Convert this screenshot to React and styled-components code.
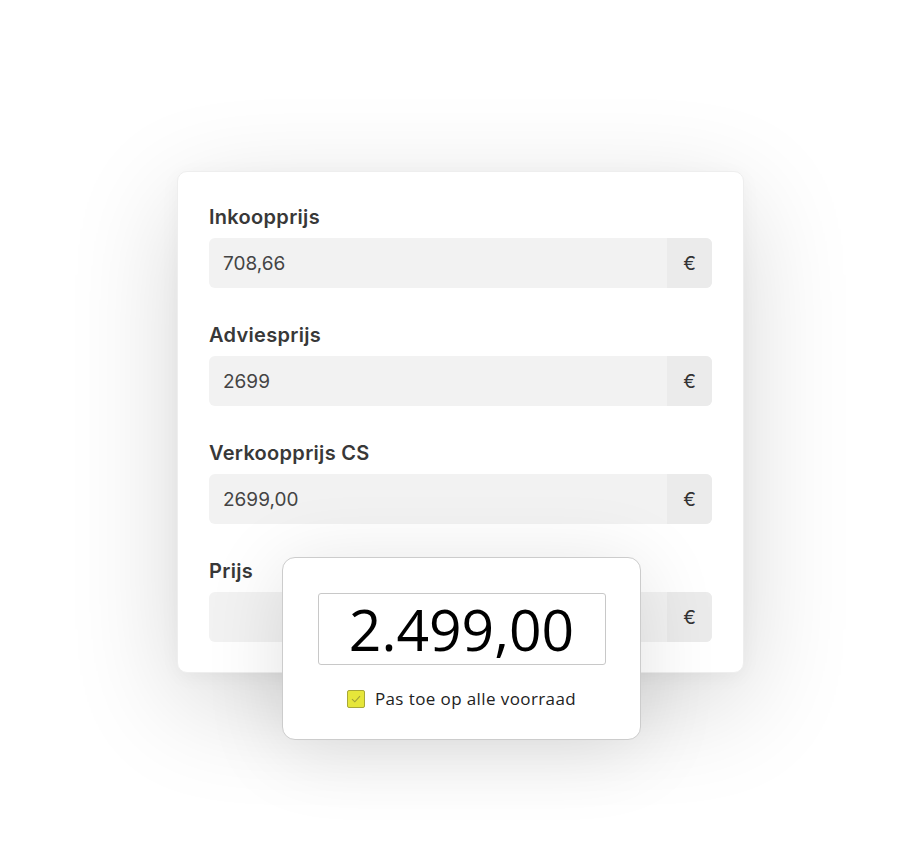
import React from 'react'
import styled, { createGlobalStyle } from 'styled-components'

const GlobalStyle = createGlobalStyle`
    html, body {
        margin: 0;
        padding: 0;
        background: #ffffff;
    }
    body {
        font-family: "Inter", "Open Sans", sans-serif;
    }
`

const fields = [
    { label: 'Inkoopprijs', value: '708,66' },
    { label: 'Adviesprijs', value: '2699' },
    { label: 'Verkoopprijs CS', value: '2699,00' },
    { label: 'Prijs', value: '' },
]

const App = () => {
    return (
        <>
            <GlobalStyle />
            <Page>
                <Stage>
                    <Card>
                        {fields.map((f) => (
                            <Field key={f.label}>
                                <Label>{f.label}</Label>
                                <InputGroup>
                                    <Value>{f.value}</Value>
                                    <Addon>€</Addon>
                                </InputGroup>
                            </Field>
                        ))}
                    </Card>
                    <Popup>
                        <BigInput>2.499,00</BigInput>
                        <CheckRow>
                            <Check>
                                <svg width="10" height="8" viewBox="0 0 10 8">
                                    <path d="M1 4.2 L3.8 6.8 L9 1.2" fill="none" stroke="#a0a038" strokeWidth="1.1" />
                                </svg>
                            </Check>
                            <CheckLabel>Pas toe op alle voorraad</CheckLabel>
                        </CheckRow>
                    </Popup>
                </Stage>
            </Page>
        </>
    )
}

export default App

const Page = styled.div`
    width: 921px;
    height: 855px;
    display: flex;
    justify-content: center;
    padding-top: 171px;
    box-sizing: border-box;
    overflow: hidden;
`

const Stage = styled.div`
    position: relative;
    width: 567px;
    height: 501px;
`

const Card = styled.div`
    width: 567px;
    box-sizing: border-box;
    background: #ffffff;
    border-radius: 10px;
    border: 1px solid #eeeeee;
    padding: 32px 31px 30px 31px;
    display: flex;
    flex-direction: column;
    gap: 34px;
    box-shadow: 0 30px 110px rgba(0, 0, 0, 0.16), 0 4px 20px rgba(0, 0, 0, 0.04);
`

const Field = styled.div`
    display: flex;
    flex-direction: column;
    gap: 7px;
`

const Label = styled.div`
    font-family: "Inter", sans-serif;
    font-weight: 600;
    font-size: 20px;
    line-height: 27px;
    color: #383838;
    letter-spacing: 0.3px;
`

const InputGroup = styled.div`
    display: flex;
    height: 50px;
    border-radius: 6px;
    overflow: hidden;
    background: #f2f2f2;
`

const Value = styled.div`
    flex: 1;
    display: flex;
    align-items: center;
    padding-left: 14px;
    font-family: "Inter", sans-serif;
    font-size: 19px;
    color: #444444;
`

const Addon = styled.div`
    width: 45px;
    display: flex;
    align-items: center;
    justify-content: center;
    background: #ebebeb;
    font-family: "Inter", sans-serif;
    font-size: 19px;
    color: #333333;
`

const Popup = styled.div`
    position: absolute;
    top: 386px;
    left: 105px;
    width: 359px;
    height: 183px;
    box-sizing: border-box;
    background: #ffffff;
    border: 1px solid #cccccc;
    border-radius: 13px;
    display: flex;
    flex-direction: column;
    align-items: center;
    padding-top: 35px;
    box-shadow: 0 10px 80px rgba(0, 0, 0, 0.12);
`

const BigInput = styled.div`
    width: 288px;
    height: 72px;
    box-sizing: border-box;
    border: 1px solid #c8c8c8;
    border-radius: 3px;
    display: flex;
    align-items: center;
    justify-content: center;
    font-family: "Open Sans", sans-serif;
    font-size: 57px;
    line-height: 1;
    color: #000000;
`

const CheckRow = styled.div`
    display: flex;
    align-items: center;
    gap: 10px;
    margin-top: 22px;
`

const Check = styled.div`
    width: 18px;
    height: 18px;
    box-sizing: border-box;
    background: #e6e63a;
    border: 1px solid #a8a838;
    border-radius: 2px;
    display: flex;
    align-items: center;
    justify-content: center;
`

const CheckLabel = styled.div`
    font-family: "Open Sans", sans-serif;
    font-size: 17px;
    letter-spacing: 0.4px;
    color: #222222;
`
